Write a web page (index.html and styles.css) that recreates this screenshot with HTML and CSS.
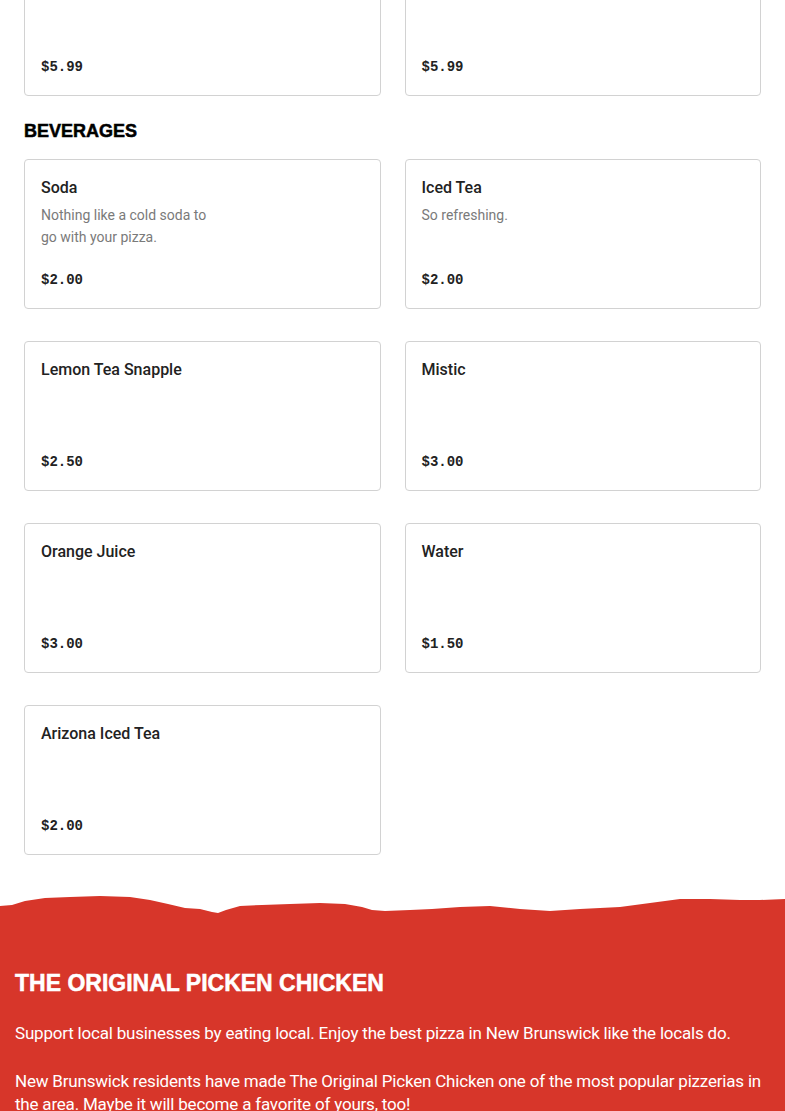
FILE: index.html
```html
<!DOCTYPE html>
<html lang="en">

<head>
    <meta charset="UTF-8">
    <meta name="viewport" content="width=device-width, initial-scale=1.0">
    <title>The Original Picken Chicken - Menu</title>
    <link rel="stylesheet" href="styles.css">
</head>

<body>
    <main class="menu">
        <section class="menu-section menu-section--prev">
            <div class="menu-grid">
                <div class="item">
                    <div class="item-price">$5.99</div>
                </div>
                <div class="item">
                    <div class="item-price">$5.99</div>
                </div>
            </div>
        </section>

        <section class="menu-section">
            <h2 class="section-title">BEVERAGES</h2>
            <div class="menu-grid">
                <div class="item">
                    <h3 class="item-name">Soda</h3>
                    <p class="item-desc">Nothing like a cold soda to go with your pizza.</p>
                    <div class="item-price">$2.00</div>
                </div>
                <div class="item">
                    <h3 class="item-name">Iced Tea</h3>
                    <p class="item-desc">So refreshing.</p>
                    <div class="item-price">$2.00</div>
                </div>
                <div class="item">
                    <h3 class="item-name">Lemon Tea Snapple</h3>
                    <div class="item-price">$2.50</div>
                </div>
                <div class="item">
                    <h3 class="item-name">Mistic</h3>
                    <div class="item-price">$3.00</div>
                </div>
                <div class="item">
                    <h3 class="item-name">Orange Juice</h3>
                    <div class="item-price">$3.00</div>
                </div>
                <div class="item">
                    <h3 class="item-name">Water</h3>
                    <div class="item-price">$1.50</div>
                </div>
                <div class="item">
                    <h3 class="item-name">Arizona Iced Tea</h3>
                    <div class="item-price">$2.00</div>
                </div>
            </div>
        </section>
    </main>

    <footer class="about">
        <svg class="torn-edge" viewBox="0 0 785 20" preserveAspectRatio="none">
            <path d="M0 12 L12 11 L25 7 L45 4 L70 3 L100 2 L130 3 L150 6 L168 10 L185 14 L200 15 L212 18 L218 19 L226 16 L240 12 L262 11 L290 10 L320 9 L345 10 L362 13 L372 16 L385 17 L410 16 L432 15 L460 13 L490 12 L520 15 L550 17 L580 15 L620 13 L650 9 L680 5 L710 5 L740 6 L760 6 L785 5 L785 20 L0 20 Z" fill="#d7362a" />
        </svg>
        <div class="about-body">
            <h2 class="about-title">THE ORIGINAL PICKEN CHICKEN</h2>
            <p>Support local businesses by eating local. Enjoy the best pizza in New Brunswick like the locals do.</p>
            <p>New Brunswick residents have made The Original Picken Chicken one of the most popular pizzerias in the area. Maybe it will become a favorite of yours, too!</p>
        </div>
    </footer>
</body>

</html>
```

FILE: styles.css
```css
body {
    margin: 0;
    padding: 0;
    background-color: #fff;
    color: #222;
    font-family: Roboto, "Liberation Sans", sans-serif;
    overflow: hidden;
}

.menu {
    padding: 0 24px;
}

.menu-section {
    margin-bottom: 24px;
}

.menu-section--prev {
    margin-top: -54px;
}

.section-title {
    font-family: "Liberation Sans", Arial, sans-serif;
    font-weight: 700;
    font-size: 18px;
    line-height: 22px;
    margin: 0 0 17px;
    color: #000;
    -webkit-text-stroke: 0.5px #000;
}

.menu-grid {
    display: grid;
    grid-template-columns: 1fr 1fr;
    column-gap: 24px;
    row-gap: 32px;
}

.item {
    display: flex;
    flex-direction: column;
    min-height: 150px;
    box-sizing: border-box;
    padding: 16px;
    border: 1px solid #d2d2d2;
    border-radius: 4px;
    background-color: #fff;
}

.item-name {
    margin: 0;
    font-size: 16px;
    font-weight: 500;
    line-height: 24px;
    color: #222;
}

.item-desc {
    margin: 4px 0 0;
    max-width: 176px;
    font-size: 14px;
    line-height: 22px;
    color: #7a7a7a;
}

.item-price {
    margin-top: auto;
    font-family: "Liberation Mono", "DejaVu Sans Mono", monospace;
    font-weight: 700;
    font-size: 14px;
    line-height: 24px;
    color: #222;
}

.about {
    margin-top: 39px;
}

.torn-edge {
    display: block;
    width: 100%;
    height: 20px;
}

.about-body {
    background-color: #d7362a;
    color: #fff;
    padding: 55px 15px 40px;
}

.about-title {
    font-family: "Liberation Sans", Arial, sans-serif;
    font-weight: 700;
    font-size: 23px;
    line-height: 28px;
    margin: 0 0 25px;
    -webkit-text-stroke: 0.5px #fff;
}

.about-body p {
    font-family: Roboto, sans-serif;
    font-size: 17px;
    line-height: 23px;
    letter-spacing: -0.2px;
    margin: 0 0 25px;
}
```
